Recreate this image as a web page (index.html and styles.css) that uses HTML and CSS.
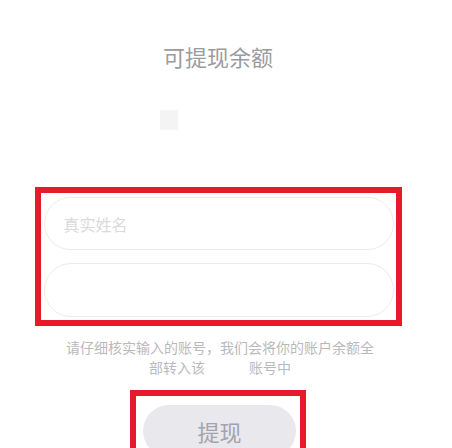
FILE: index.html
```html
<!DOCTYPE html>
<html lang="zh">
<head>
<meta charset="utf-8">
<link rel="stylesheet" href="styles.css">
</head>
<body>
<div class="page">
  <h1 class="title">可提现余额</h1>
  <div class="amount">
    <span class="amount-mark"></span>
  </div>
  <div class="highlight form-box">
    <div class="field"><span class="placeholder">真实姓名</span></div>
    <div class="field field-tall"></div>
  </div>
  <div class="hint">
    <span class="hint-line">请仔细核实输入的账号，我们会将你的账户余额全</span>
    <span class="hint-line hint-split"><span>部转入该</span><span>账号中</span></span>
  </div>
  <div class="highlight btn-box">
    <div class="btn">提现</div>
  </div>
</div>
</body>
</html>
```

FILE: styles.css
```css
html, body {
  margin: 0;
  padding: 0;
  background: #ffffff;
  overflow: hidden;
}
body {
  font-family: "Noto Sans CJK SC", "Noto Sans", sans-serif;
}
.page {
  width: 436px;
  height: 448px;
  display: flex;
  flex-direction: column;
  align-items: center;
  padding-top: 40px;
  box-sizing: border-box;
}
.page > * {
  flex-shrink: 0;
}
.title {
  margin: 0;
  font-size: 22px;
  line-height: 32px;
  font-weight: 400;
  color: #9b9ba0;
}
.amount {
  width: 120px;
  height: 40px;
  margin-top: 38px;
  display: flex;
  justify-content: flex-start;
}
.amount-mark {
  display: block;
  width: 18px;
  height: 20px;
  margin-left: 2px;
  background: #f4f4f5;
}
.highlight {
  border: 6px solid #e61a2b;
  box-sizing: border-box;
}
.form-box {
  width: 367px;
  margin-top: 37px;
  padding: 4px 2px 3px 3px;
  display: flex;
  flex-direction: column;
  gap: 13px;
}
.field {
  height: 53px;
  border: 1.5px solid #ebebeb;
  border-radius: 27px;
  box-sizing: border-box;
  display: flex;
  align-items: center;
  padding-left: 19px;
}
.field-tall {
  height: 54px;
}
.placeholder {
  font-size: 16px;
  color: #dadada;
}
.hint {
  margin: 11px 0 0 4px;
  display: flex;
  flex-direction: column;
  align-items: center;
  font-size: 14px;
  line-height: 20px;
  color: #b9b9bd;
}
.hint-line {
  white-space: nowrap;
}
.hint-split {
  display: flex;
  gap: 44px;
}
.btn-box {
  width: 176px;
  height: 80px;
  margin-top: 13px;
  padding: 9px 4px 0 7px;
}
.btn {
  height: 52px;
  border-radius: 26px;
  background: #e9e8ed;
  color: #a3a3ab;
  font-size: 22px;
  line-height: 52px;
  text-align: center;
}
```
